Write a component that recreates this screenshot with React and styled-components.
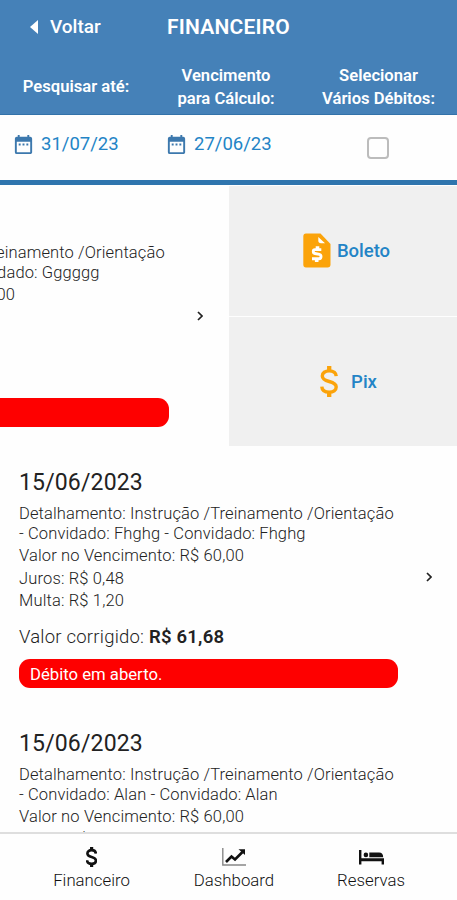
import React from 'react'
import styled, { createGlobalStyle } from 'styled-components'
import { MdDateRange } from 'react-icons/md'

const debitos = [
    { id: 1, data: '15/06/2023', linha1: 'Detalhamento: Instrução /Treinamento /Orientação', linha2: '- Convidado: Gggggg - Convidado: Gggggg', aberto: true },
    { id: 2, data: '15/06/2023', linha1: 'Detalhamento: Instrução /Treinamento /Orientação', linha2: '- Convidado: Fhghg - Convidado: Fhghg', aberto: false },
    { id: 3, data: '15/06/2023', linha1: 'Detalhamento: Instrução /Treinamento /Orientação', linha2: '- Convidado: Alan - Convidado: Alan', aberto: false },
]

const DollarIcon = ({ width, height, weight }) => (
    <svg width={width} height={height} viewBox="0 0 18 31" preserveAspectRatio="none" fill="none" stroke="currentColor" strokeWidth={weight}>
        <path d="M16.2 10.2C15.9 6.7 13 4.9 9.2 4.9C5.2 4.9 2.3 6.8 2.3 10C2.3 13.3 5 14.4 9.2 15.5C13.7 16.7 16.2 18 16.2 21C16.2 24.3 13.3 26.1 9.3 26.1C4.9 26.1 2 24.1 1.8 20.6" />
        <path d="M9.2 0V5M9.2 26V31" strokeWidth={weight + 0.9} />
    </svg>
)

const BoletoIcon = () => (
    <svg width="28" height="35" viewBox="0 0 28 35" fill="none">
        <path d="M3 0.5H17.5L27.5 11V31.5Q27.5 34.5 24.5 34.5H3Q0.3 34.5 0.3 31.5V3.5Q0.3 0.5 3 0.5Z" fill="currentColor" />
        <path d="M15.3 4V7.5Q15.3 10.2 18 10.2H22Z" fill="#fff" />
        <path d="M18.3 16.6H12Q10.3 16.6 10.3 18.4Q10.3 20.2 12 20.5L16.4 21.4Q18 21.8 18 23.5Q18 25.7 16 25.7H9" stroke="#fff" strokeWidth="2.9" />
        <path d="M14.5 13.2V16.5M13.7 25.5V29" stroke="#fff" strokeWidth="3.6" />
    </svg>
)

const ChartIcon = () => (
    <svg width="24" height="20" viewBox="0 0 24 20" fill="none">
        <path d="M0.8 1V18H24" stroke="#888" strokeWidth="1.4" />
        <path d="M4 15L9.5 9.5L13 12.5L20.5 5" stroke="#111" strokeWidth="2.6" />
        <path d="M16.5 2.2H23V8Z" fill="#111" />
    </svg>
)

const BedIcon = () => (
    <svg width="25" height="16" viewBox="0 0 25 16" fill="#111">
        <path d="M0 1H2.4V9.2H25V15.5H22.6V12.3H2.4V15.5H0Z" />
        <circle cx="6.9" cy="5.9" r="2.3" />
        <path d="M10.3 3.5H20Q24.2 3.5 24.2 8.2H10.3Z" />
    </svg>
)

const Debito = ({ debito }) => (
    <Item $aberto={debito.aberto}>
        <Conteudo>
            <Data>{debito.data}</Data>
            <Detalhe>{debito.linha1}</Detalhe>
            <Detalhe>{debito.linha2}</Detalhe>
            <Valores>
                <Valor>Valor no Vencimento: R$ 60,00</Valor>
                <Valor>Juros: R$ 0,48</Valor>
                <Valor>Multa: R$ 1,20</Valor>
            </Valores>
            <Total>Valor corrigido: <b>R$ 61,68</b></Total>
            <Status>Débito em aberto.</Status>
        </Conteudo>
        <Seta>
            <svg width="6" height="10" viewBox="0 0 6 10" fill="none" stroke="#222" strokeWidth="1.7">
                <path d="M1 1L5 5L1 9" />
            </svg>
        </Seta>
        {debito.aberto && (
            <Opcoes>
                <Opcao $gap="6px" $shift="7px"><BoletoIcon /><span>Boleto</span></Opcao>
                <Opcao $gap="13px" $shift="11px"><DollarIcon width={18} height={31} weight={3.4} /><span>Pix</span></Opcao>
            </Opcoes>
        )}
    </Item>
)

const App = () => {
    return (
        <Container>
            <GlobalStyle />
            <Header>
                <Topo>
                    <Voltar>
                        <svg width="8" height="14" viewBox="0 0 8 14" fill="#fff"><path d="M8 0V14L0 7Z" /></svg>
                        Voltar
                    </Voltar>
                    <Titulo>FINANCEIRO</Titulo>
                </Topo>
                <Colunas>
                    <Rotulo>Pesquisar até:</Rotulo>
                    <Rotulo>Vencimento<br />para Cálculo:</Rotulo>
                    <Rotulo>Selecionar<br />Vários Débitos:</Rotulo>
                </Colunas>
            </Header>
            <Filtros>
                <Periodo><MdDateRange size={23} /><span>31/07/23</span></Periodo>
                <Periodo><MdDateRange size={23} /><span>27/06/23</span></Periodo>
                <Caixa />
            </Filtros>
            <Lista>
                {debitos.map(debito => <Debito key={debito.id} debito={debito} />)}
            </Lista>
            <Menu>
                <MenuItem $width="183px">
                    <Icone><DollarIcon width={11} height={20} weight={4.3} /></Icone>
                    <span>Financeiro</span>
                </MenuItem>
                <MenuItem $width="102px">
                    <Icone><ChartIcon /></Icone>
                    <span>Dashboard</span>
                </MenuItem>
                <MenuItem $width="172px">
                    <Icone><BedIcon /></Icone>
                    <span>Reservas</span>
                </MenuItem>
            </Menu>
        </Container>
    )
}

const GlobalStyle = createGlobalStyle`
*{
    box-sizing: border-box;
}
body{
    margin: 0;
    background: #fff;
}
`

const Container = styled.div`
width: 457px;
height: 900px;
display: flex;
flex-direction: column;
overflow: hidden;
background: #fefefe;
font-family: Roboto, 'Liberation Sans', sans-serif;
color: #222;
svg{
    display: block;
    flex: none;
}
`

const Header = styled.header`
flex: none;
height: 115px;
background: #4581b8;
border-bottom: 1px solid #3272a9;
color: #fff;
`

const Topo = styled.div`
height: 53px;
display: flex;
align-items: center;
`

const Voltar = styled.div`
width: 167px;
padding-left: 30px;
display: flex;
align-items: center;
gap: 12px;
font-size: 19px;
font-weight: 500;
`

const Titulo = styled.h1`
margin: 0;
font-size: 21px;
font-weight: 600;
letter-spacing: 0.2px;
`

const Colunas = styled.div`
height: 69px;
display: grid;
grid-template-columns: 152px 148px 157px;
align-items: center;
`

const Rotulo = styled.div`
text-align: center;
font-size: 16.6px;
line-height: 22.5px;
font-weight: 600;
white-space: nowrap;
`

const Filtros = styled.div`
flex: none;
height: 70px;
padding: 0 0 7px 12px;
display: grid;
grid-template-columns: 153px 202px 1fr;
align-items: center;
border-bottom: 5px solid #2f75ae;
`

const Periodo = styled.div`
display: flex;
align-items: center;
gap: 6px;
color: #3c78ad;
span{
    color: #2384c6;
    font-size: 18.5px;
}
`

const Caixa = styled.div`
width: 22px;
height: 22px;
margin-top: 8px;
border: 2px solid #bcbcbc;
border-radius: 4px;
`

const Lista = styled.main`
flex: 1;
min-height: 0;
overflow: hidden;
`

const Item = styled.div`
height: 261px;
display: flex;
margin-left: ${props => props.$aberto ? '-229px' : '0'};
`

const Conteudo = styled.div`
width: 421px;
flex: none;
padding: 22px 0 0 19px;
white-space: nowrap;
`

const Data = styled.div`
height: 36px;
font-size: 23px;
line-height: 30px;
letter-spacing: 0.15px;
`

const Detalhe = styled.div`
font-size: 16.5px;
line-height: 20px;
font-weight: 300;
letter-spacing: 0.12px;
`

const Valores = styled.div`
padding-top: 1px;
`

const Valor = styled.div`
font-size: 16.5px;
line-height: 22.5px;
font-weight: 300;
letter-spacing: 0.15px;
`

const Total = styled.div`
margin-top: 12px;
font-size: 18.5px;
line-height: 24px;
font-weight: 300;
letter-spacing: 0.22px;
b{
    font-weight: 600;
}
`

const Status = styled.div`
width: 379px;
height: 29.5px;
margin-top: 10px;
padding-left: 11px;
border-radius: 11px;
background: #fe0000;
color: #fff;
font-size: 16.7px;
line-height: 31px;
`

const Seta = styled.div`
width: 36px;
flex: none;
display: flex;
align-items: center;
padding-left: 5px;
`

const Opcoes = styled.div`
width: 229px;
flex: none;
display: grid;
grid-template-rows: 1fr 1fr;
gap: 1px;
padding: 1px 0 0 1px;
`

const Opcao = styled.div`
background: #f0f0f0;
display: flex;
align-items: center;
justify-content: center;
padding-left: ${props => props.$shift};
gap: ${props => props.$gap};
color: #fba30a;
span{
    padding-top: 1px;
    color: #2384c6;
    font-size: 18.5px;
    font-weight: 500;
}
`

const Menu = styled.nav`
flex: none;
height: 68px;
display: flex;
background: #fefefe;
border-top: 2px solid #dedede;
`

const MenuItem = styled.div`
width: ${props => props.$width};
padding-top: 12px;
display: flex;
flex-direction: column;
align-items: center;
font-size: 16.8px;
line-height: 24px;
font-weight: 300;
color: #111;
`

const Icone = styled.div`
height: 22px;
display: flex;
align-items: center;
`

export default App
